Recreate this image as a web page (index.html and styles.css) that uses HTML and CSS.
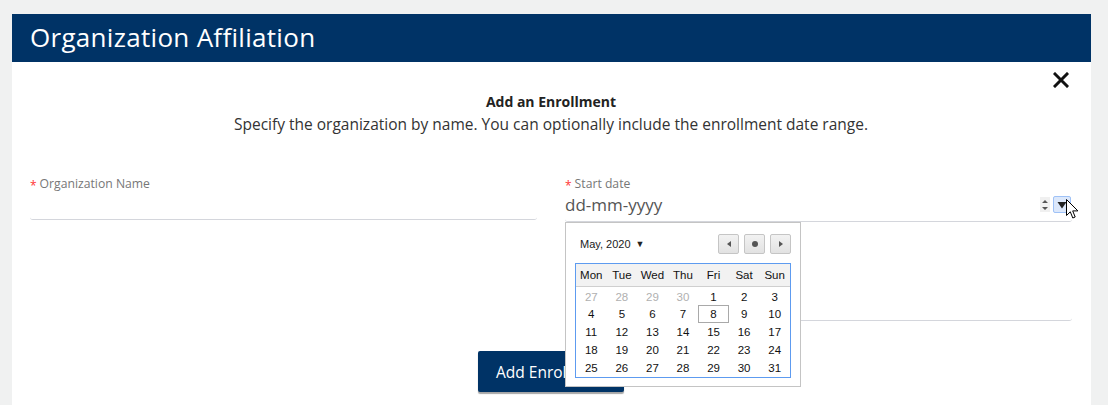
FILE: index.html
```html
<!DOCTYPE html>
<html>
<head>
<meta charset="utf-8">
<link rel="stylesheet" href="styles.css">
</head>
<body>
<div class="panel">
  <div class="header">Organization Affiliation</div>
  <div class="content">
    <button class="close" aria-label="Close">
      <svg width="16" height="16" viewBox="0 0 16 16"><path d="M2 2 L14 14 M14 2 L2 14" stroke="#111" stroke-width="3" stroke-linecap="square"/></svg>
    </button>
    <div class="intro">
      <div class="intro-title">Add an Enrollment</div>
      <div class="intro-text">Specify the organization by name. You can optionally include the enrollment date range.</div>
    </div>
    <div class="form">
      <div class="col">
        <div class="field">
          <label class="label"><span class="req">*</span>Organization Name</label>
          <div class="input"></div>
        </div>
      </div>
      <div class="col">
        <div class="field date-field">
          <label class="label"><span class="req">*</span>Start date</label>
          <div class="input date-input">
            <span class="placeholder">dd-mm-yyyy</span>
            <span class="controls">
              <span class="spin">
                <svg width="8" height="14" viewBox="0 0 8 14"><path d="M1 5 L4 2 L7 5 Z M1 9 L4 12 L7 9 Z" fill="#555"/></svg>
              </span>
              <span class="drop">
                <svg width="10" height="8" viewBox="0 0 10 8"><path d="M0.5 1 L9.5 1 L5 7.5 Z" fill="#222"/></svg>
              </span>
            </span>
          </div>
        </div>
        <div class="field end-field">
          <label class="label">End date</label>
          <div class="input"></div>
        </div>
      </div>
    </div>
    <div class="actions">
      <button class="btn">Add Enrollment</button>
    </div>

    <div class="calendar">
      <div class="cal-head">
        <span class="cal-month">May, 2020 <span class="caret">&#9660;</span></span>
        <span class="cal-nav">
          <span class="nb"><svg width="4" height="6" viewBox="0 0 4 6"><path d="M4 0 L0 3 L4 6 Z" fill="#555"/></svg></span>
          <span class="nb"><svg width="6" height="6" viewBox="0 0 6 6"><circle cx="3" cy="3" r="3" fill="#555"/></svg></span>
          <span class="nb"><svg width="4" height="6" viewBox="0 0 4 6"><path d="M0 0 L4 3 L0 6 Z" fill="#555"/></svg></span>
        </span>
      </div>
      <table class="cal-grid">
        <thead>
          <tr><th>Mon</th><th>Tue</th><th>Wed</th><th>Thu</th><th>Fri</th><th>Sat</th><th>Sun</th></tr>
        </thead>
        <tbody>
          <tr class="first"><td class="other">27</td><td class="other">28</td><td class="other">29</td><td class="other">30</td><td>1</td><td>2</td><td>3</td></tr>
          <tr><td>4</td><td>5</td><td>6</td><td>7</td><td class="today">8</td><td>9</td><td>10</td></tr>
          <tr><td>11</td><td>12</td><td>13</td><td>14</td><td>15</td><td>16</td><td>17</td></tr>
          <tr><td>18</td><td>19</td><td>20</td><td>21</td><td>22</td><td>23</td><td>24</td></tr>
          <tr><td>25</td><td>26</td><td>27</td><td>28</td><td>29</td><td>30</td><td>31</td></tr>
        </tbody>
      </table>
    </div>

    <svg class="cursor" width="13" height="21" viewBox="0 0 13 21"><path d="M0.5 0.5 L0.5 16.5 L4.3 12.8 L6.8 19 L9.2 18 L6.7 11.9 L11.9 11.9 Z" fill="#fff" stroke="#000" stroke-width="1"/></svg>
  </div>
</div>
</body>
</html>
```

FILE: styles.css
```css
* { box-sizing: border-box; }
html, body { margin: 0; padding: 0; }
body {
  background: #f0f1f1;
  padding: 14px 17px 0 12px;
  font-family: "Open Sans", "Noto Sans", sans-serif;
  height: 405px;
  overflow: hidden;
}
.panel {
  width: 1079px;
  background: #fff;
  height: 400px;
}
.header {
  height: 48px;
  background: #003366;
  color: #fff;
  font-size: 26px;
  line-height: 46px;
  padding-left: 18px;
  letter-spacing: 0.3px;
}
.content {
  position: relative;
  padding: 30px 19px 0 18px;
}
.close {
  position: absolute;
  top: 10px;
  right: 22px;
  border: 0;
  background: none;
  padding: 0;
  width: 16px;
  height: 16px;
  cursor: pointer;
}
.close svg { display: block; }
.intro {
  text-align: center;
  color: #222;
}
.intro-title {
  font-size: 14px;
  font-weight: 700;
  line-height: 20px;
}
.intro-text {
  font-size: 15.5px;
  line-height: 22px;
  margin-top: 1px;
  color: #333;
}
.form {
  display: grid;
  grid-template-columns: 507px 507px;
  column-gap: 28px;
  margin-top: 41px;
}
.field { display: flex; flex-direction: column; }
.label {
  font-size: 12.2px;
  color: #777;
  line-height: 16px;
  height: 16px;
}
.req {
  display: inline-block;
  color: #f33;
  font-size: 12px;
  line-height: 8px;
  margin-right: 3px;
  position: relative;
  top: 2px;
}
.input {
  height: 28px;
  border-bottom: 1px solid #d4d6dc;
  border-radius: 0 0 3px 3px;
}
.date-input {
  height: 30px;
  display: flex;
  align-items: center;
  justify-content: space-between;
}
.placeholder {
  font-size: 17px;
  color: #555;
  line-height: 20px;
  position: relative;
  top: -2px;
}
.controls {
  display: flex;
  align-items: center;
  gap: 3px;
  padding-right: 1px;
  position: relative;
  top: -2px;
}
.spin {
  width: 10px;
  height: 15px;
  background: #f0f0f0;
  display: flex;
  align-items: center;
  justify-content: center;
}
.spin svg { display: block; }
.drop {
  width: 18px;
  height: 17px;
  border: 1px solid #9fc2f7;
  background: #dce8fb;
  display: flex;
  align-items: center;
  justify-content: center;
  border-radius: 2px;
}
.drop svg { display: block; }
.end-field { margin-top: 33px; }
.end-field .label { color: transparent; }
.end-field .input { height: 50px; }
.actions {
  display: flex;
  justify-content: center;
  margin-top: 30px;
}
.btn {
  width: 146px;
  height: 41px;
  background: #003366;
  color: #fff;
  border: 0;
  border-radius: 2px;
  font-family: "Open Sans", "Noto Sans", sans-serif;
  font-size: 15.5px;
  font-weight: 500;
  box-shadow: 0 2px 1px rgba(0,0,0,0.35);
  text-align: left;
  padding: 0 0 0 18px;
}
.calendar {
  position: absolute;
  left: 553px;
  top: 160px;
  width: 236px;
  height: 165px;
  background: #fff;
  border: 1px solid #c4c4c4;
  font-family: "Liberation Sans", Arial, sans-serif;
  padding: 10px 9px 0 9px;
}
.cal-head {
  display: flex;
  justify-content: space-between;
  align-items: center;
  height: 21px;
  padding-left: 5px;
}
.cal-month {
  font-size: 11px;
  color: #222;
}
.caret { font-size: 9px; margin-left: 2px; position: relative; top: -1px; }
.cal-nav { display: flex; gap: 5px; }
.nb {
  width: 21px;
  height: 20px;
  border: 1px solid #c5c5c5;
  border-radius: 2px;
  background: linear-gradient(#f2f2f2, #e2e2e2);
  display: flex;
  align-items: center;
  justify-content: center;
}
.nb svg { display: block; }
.cal-grid {
  margin-top: 9px;
  width: 216px;
  table-layout: fixed;
  border: 1px solid #5d9bf0;
  border-collapse: separate;
  border-spacing: 0;
  font-size: 11.5px;
  color: #111;
}
.cal-grid th {
  background: #f2f2f2;
  border-bottom: 1px solid #cfcfcf;
  font-weight: 400;
  height: 23px;
  padding: 0;
  font-size: 11.5px;
  text-align: center;
}
.cal-grid td {
  height: 18px;
  padding: 0;
  text-align: center;
  line-height: 16px;
}
.cal-grid tr.first td { padding-top: 1px; }
.cal-grid td.other { color: #b0b0b0; }
.cal-grid td.today { outline: 1px solid #a9a9a9; outline-offset: -1px; }
.cursor {
  position: absolute;
  left: 1054px;
  top: 137px;
}
```
